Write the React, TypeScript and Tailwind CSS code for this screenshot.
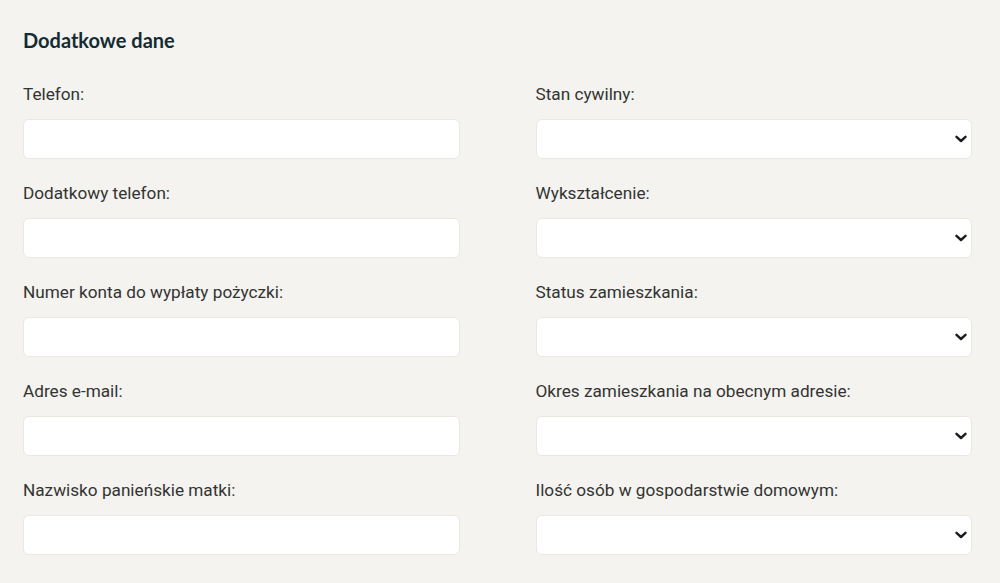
const leftFields = [
  "Telefon:",
  "Dodatkowy telefon:",
  "Numer konta do wypłaty pożyczki:",
  "Adres e-mail:",
  "Nazwisko panieńskie matki:",
];

const rightFields = [
  "Stan cywilny:",
  "Wykształcenie:",
  "Status zamieszkania:",
  "Okres zamieszkania na obecnym adresie:",
  "Ilość osób w gospodarstwie domowym:",
];

const Chevron = () => (
  <svg
    className="pointer-events-none absolute right-[5px] top-1/2 -translate-y-1/2"
    width="12"
    height="8"
    viewBox="0 0 12 8"
    fill="none"
  >
    <path d="M1.5 1.8 6 6 10.5 1.8" stroke="#1c1c1c" strokeWidth="2.4" strokeLinecap="round" strokeLinejoin="round" />
  </svg>
);

const Field = ({ label, select }: { label: string; select?: boolean }) => (
  <div className="flex flex-col">
    <label className="h-5 text-[17.2px] leading-5 text-[#333333]">{label}</label>
    <div className="relative mt-[15px]">
      {select ? (
        <select className="h-10 w-full appearance-none rounded-[6px] border border-[#ebe8e2] bg-white px-3 outline-none">
          <option></option>
        </select>
      ) : (
        <input className="h-10 w-full rounded-[6px] border border-[#ebe8e2] bg-white px-3 outline-none" />
      )}
      {select && <Chevron />}
    </div>
  </div>
);

export default function App() {
  return (
    <div
      className="min-h-[583px] w-full bg-[#f4f3ef] pl-[23px] pr-[28px] pt-[28px]"
      style={{ fontFamily: "Roboto, 'Liberation Sans', sans-serif" }}
    >
      <h2 className="h-6 text-[20px] font-bold leading-6 text-[#142b33] [font-family:Lato,sans-serif]">
        Dodatkowe dane
      </h2>
      <div className="mt-8 grid grid-cols-2 gap-x-[76px]">
        <div className="flex flex-col gap-6">
          {leftFields.map((f) => (
            <Field key={f} label={f} />
          ))}
        </div>
        <div className="flex flex-col gap-6">
          {rightFields.map((f) => (
            <Field key={f} label={f} select />
          ))}
        </div>
      </div>
    </div>
  );
}
